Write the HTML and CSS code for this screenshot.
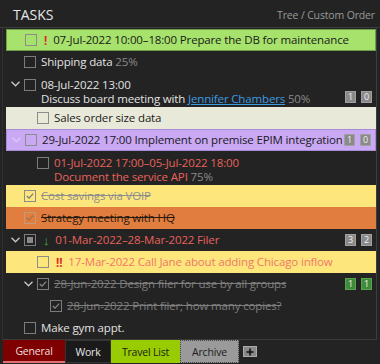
FILE: index.html
```html
<!DOCTYPE html>
<html>
<head>
<meta charset="utf-8">
<link rel="stylesheet" href="styles.css">
</head>
<body>
<div class="app">
  <header class="titlebar">
    <span class="title">TASKS</span>
    <span class="mode">Tree / Custom Order</span>
  </header>
  <div class="list">
    <div class="row l0 bg-green">
      <span class="twisty"></span>
      <span class="cb"></span>
      <span class="prio red">!</span>
      <span class="text dark">07-Jul-2022 10:00–18:00 Prepare the DB for maintenance</span>
    </div>
    <div class="row l0">
      <span class="twisty"></span>
      <span class="cb"></span>
      <span class="text">Shipping data <span class="pct">25%</span></span>
    </div>
    <div class="row l0 double">
      <span class="twisty"><svg width="9" height="6" viewBox="0 0 9 6"><polyline points="0.5,0.8 4.5,4.8 8.5,0.8" fill="none" stroke="#c8c8c8" stroke-width="1.3"/></svg></span>
      <span class="cb"></span>
      <span class="text">
        <span class="line">08-Jul-2022 13:00</span>
        <span class="line">Discuss board meeting with <a class="link">Jennifer Chambers</a> <span class="pct">50%</span></span>
      </span>
      <span class="badges"><span class="badge">1</span><span class="badge">0</span></span>
    </div>
    <div class="row l1 bg-beige">
      <span class="twisty"></span>
      <span class="cb"></span>
      <span class="text dark">Sales order size data</span>
    </div>
    <div class="row l0 bg-purple">
      <span class="twisty"><svg width="9" height="6" viewBox="0 0 9 6"><polyline points="0.5,0.8 4.5,4.8 8.5,0.8" fill="none" stroke="#dcc8f8" stroke-width="1.3"/></svg></span>
      <span class="cb"></span>
      <span class="text dark clip">29-Jul-2022 17:00 Implement on premise EPIM integration</span>
      <span class="badges"><span class="badge">1</span><span class="badge">0</span></span>
    </div>
    <div class="row l1 double">
      <span class="twisty"></span>
      <span class="cb"></span>
      <span class="text red-text">
        <span class="line">01-Jul-2022 17:00–05-Jul-2022 18:00</span>
        <span class="line">Document the service API <span class="pct">75%</span></span>
      </span>
    </div>
    <div class="row l0 bg-yellow">
      <span class="twisty"></span>
      <span class="cb checked"><svg width="10" height="10" viewBox="0 0 10 10"><polyline points="1.8,5 4,7.2 8.2,2.6" fill="none" stroke="#777" stroke-width="1.2"/></svg></span>
      <span class="text done-gray">Cost savings via VOIP</span>
    </div>
    <div class="row l0 bg-orange">
      <span class="twisty"></span>
      <span class="cb checked"><svg width="10" height="10" viewBox="0 0 10 10"><polyline points="1.8,5 4,7.2 8.2,2.6" fill="none" stroke="#a8704a" stroke-width="1.2"/></svg></span>
      <span class="text done-dark">Strategy meeting with HQ</span>
    </div>
    <div class="row l0">
      <span class="twisty"><svg width="9" height="6" viewBox="0 0 9 6"><polyline points="0.5,0.8 4.5,4.8 8.5,0.8" fill="none" stroke="#c8c8c8" stroke-width="1.3"/></svg></span>
      <span class="cb partial"><span class="fill"></span></span>
      <span class="prio green">↓</span>
      <span class="text red-text">01-Mar-2022–28-Mar-2022 Filer</span>
      <span class="badges"><span class="badge">3</span><span class="badge">2</span></span>
    </div>
    <div class="row l1 bg-yellow">
      <span class="twisty"></span>
      <span class="cb"></span>
      <span class="prio red">!!</span>
      <span class="text pink-text">17-Mar-2022 Call Jane about adding Chicago inflow</span>
    </div>
    <div class="row l1">
      <span class="twisty"><svg width="9" height="6" viewBox="0 0 9 6"><polyline points="0.5,0.8 4.5,4.8 8.5,0.8" fill="none" stroke="#c8c8c8" stroke-width="1.3"/></svg></span>
      <span class="cb checked"><svg width="10" height="10" viewBox="0 0 10 10"><polyline points="1.8,5 4,7.2 8.2,2.6" fill="none" stroke="#8a8a8a" stroke-width="1.2"/></svg></span>
      <span class="text done-dim">28-Jun-2022 Design filer for use by all groups</span>
      <span class="badges"><span class="badge green-badge">1</span><span class="badge green-badge">1</span></span>
    </div>
    <div class="row l2">
      <span class="twisty"></span>
      <span class="cb checked"><svg width="10" height="10" viewBox="0 0 10 10"><polyline points="1.8,5 4,7.2 8.2,2.6" fill="none" stroke="#8a8a8a" stroke-width="1.2"/></svg></span>
      <span class="text done-dim">28-Jun-2022 Print filer; how many copies?</span>
    </div>
    <div class="row l0">
      <span class="twisty"></span>
      <span class="cb"></span>
      <span class="text">Make gym appt.</span>
    </div>
  </div>
  <nav class="tabs">
    <span class="tab tab-general">General</span>
    <span class="tab tab-work">Work</span>
    <span class="tab tab-travel">Travel List</span>
    <span class="tab tab-archive">Archive</span>
    <span class="tab-add"><svg width="10" height="10" viewBox="0 0 10 10"><path d="M5 1.5V8.5M1.5 5H8.5" stroke="#111" stroke-width="1.6"/></svg></span>
  </nav>
</div>
</body>
</html>
```

FILE: styles.css
```css
* { box-sizing: border-box; }
html, body {
  margin: 0;
  padding: 0;
  background: #232323;
}
body {
  width: 380px;
  height: 364px;
  overflow: hidden;
  font-family: "Open Sans", "Noto Sans", sans-serif;
  font-size: 11.5px;
  letter-spacing: -0.15px;
  color: #e2e2e2;
}
.app {
  display: flex;
  flex-direction: column;
  height: 364px;
}
.titlebar {
  height: 28px;
  display: flex;
  align-items: center;
  justify-content: space-between;
  padding: 2px 5px 0 13px;
  border-bottom: 1px solid #3a3a3a;
}
.title {
  font-size: 14px;
  color: #e6e6e6;
  letter-spacing: 0;
}
.mode {
  font-size: 10.5px;
  color: #9a9a9a;
}
.list {
  height: 312px;
  margin: 0 3px 0 2px;
  padding: 1px 0 0 3px;
  border-left: 1px solid #303030;
  border-right: 1px solid #3c3c3c;
  border-bottom: 1px solid #3a3a3a;
  display: flex;
  flex-direction: column;
}
.row {
  display: flex;
  align-items: center;
  height: 22px;
  padding-right: 4px;
  white-space: nowrap;
  flex-shrink: 0;
}
.row.double {
  height: 34px;
  align-items: flex-start;
  padding-top: 5px;
}
.row.l0 { padding-left: 5px; }
.row.l1 { padding-left: 18px; }
.row.l2 { padding-left: 31px; }
.twisty {
  width: 13px;
  height: 12px;
  flex-shrink: 0;
  display: flex;
  align-items: center;
}
.cb {
  width: 12px;
  height: 12px;
  border: 1px solid #7c7c7c;
  flex-shrink: 0;
  margin-right: 5px;
  display: flex;
  align-items: center;
  justify-content: center;
}
.double .cb { margin-top: 1px; }
.partial .fill {
  width: 6px;
  height: 6px;
  background: #8a8a8a;
}
.bg-green .cb, .bg-beige .cb, .bg-purple .cb, .bg-yellow .cb { border-color: #8c8c8c; }
.bg-orange .cb { border-color: #c49a7c; }
.prio {
  font-weight: bold;
  padding-left: 2px;
  margin-right: 6px;
}
.prio.red { color: #e02a2a; }
.prio.green { color: #3fb24a; font-weight: normal; font-size: 13px; }
.text {
  flex: 1;
  min-width: 0;
  line-height: 16px;
}
.text.clip { overflow: hidden; }
.double .text { display: flex; flex-direction: column; line-height: 14px; }
.line { height: 14px; }
.dark { color: #1a1a1a; }
.pct { color: #8a8a8a; }
.link { color: #3d9be0; text-decoration: underline; }
.red-text { color: #e8625c; }
.pink-text { color: #f0766a; }
.done-gray { color: #8e8e8e; text-decoration: line-through; }
.done-dark { color: #2a1a10; text-decoration: line-through; }
.done-dim { color: #7e7e7e; text-decoration: line-through; }
.bg-green { background: #a6e26c; border: 1px solid #6e9e46; }
.bg-beige { background: #e9e9d9; }
.bg-purple { background: #c9a8f4; border: 1px solid #a88ad6; }
.bg-yellow { background: #fde77c; }
.bg-orange { background: #e17d3f; }
.badges {
  display: flex;
  gap: 5px;
  margin-left: 2px;
  flex-shrink: 0;
}
.double .badges { align-self: flex-end; margin-bottom: 4px; }
.badge {
  width: 11px;
  height: 12px;
  background: #8a8a8a;
  border: 1px solid #a0a0a0;
  color: #f0f0f0;
  font-size: 9px;
  line-height: 10px;
  letter-spacing: 0;
  text-align: center;
}
.green-badge { background: #3e8c3a; border-color: #5aa050; }
.tabs {
  display: flex;
  align-items: stretch;
  height: 24px;
  padding-left: 3px;
}
.tab {
  display: flex;
  align-items: center;
  justify-content: center;
  font-size: 10.5px;
  letter-spacing: -0.2px;
  height: 23px;
}
.tab-general {
  width: 62px;
  background: #7e0000;
  color: #f4dede;
  border-bottom: 2px solid #e07070;
}
.tab-work {
  width: 46px;
  background: #1a1a1a;
  color: #e6e6e6;
  border: 1px solid #333;
}
.tab-travel {
  width: 69px;
  background: #98cc00;
  color: #1a1a1a;
}
.tab-archive {
  width: 59px;
  background: #9a9a9a;
  color: #1a1a1a;
  border: 1px dotted #444;
}
.tab-add {
  margin: 6px 0 0 4px;
  width: 14px;
  height: 11px;
  background: #888;
  border: 1px solid #aaa;
  display: flex;
  align-items: center;
  justify-content: center;
}
```
